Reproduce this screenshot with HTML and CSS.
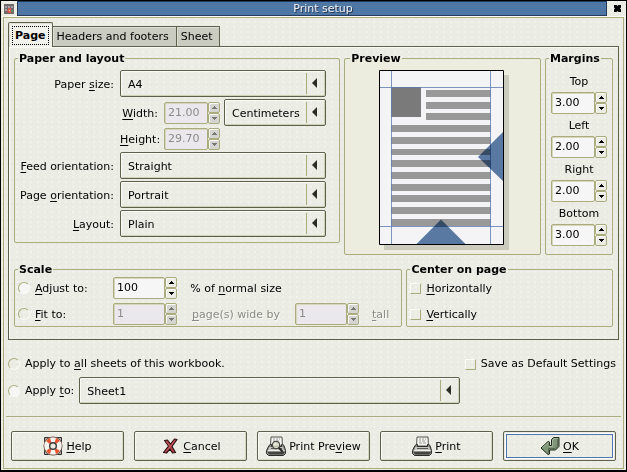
FILE: index.html
```html
<!DOCTYPE html>
<html lang="en">
<head>
<meta charset="utf-8">
<title>Print setup</title>
<link rel="stylesheet" href="styles.css">
</head>
<body>
<svg class="defs" aria-hidden="true">
  <symbol id="up" viewBox="0 0 5 3"><path d="M2 0h1v1h1v1h1v1H0V2h1V1h1z"/></symbol>
  <symbol id="down" viewBox="0 0 5 3"><path d="M0 0h5v1H4v1H3v1H2V2H1V1H0z"/></symbol>
  <symbol id="printer" viewBox="0 0 20 20">
    <path d="M5 1h11l.5 9h-12z" fill="#f4f4f0" stroke="#55554f"/>
    <path d="M7 3h2M10 3h2M13 3h1M7 5h2M10 5h3M7 7h3M11 7h3" stroke="#9a9a96"/>
    <path d="M3 9.500l1.500-1h1v2h10v-2h1l1.500 1 1.500 5v3l-2 2h-15l-2-2v-3z" fill="#8c8c88" stroke="#2c2c2a"/>
    <path d="M3.500 11h13.500l1 3h-15.500z" fill="#c6c6c2"/>
    <path d="M2 14.500h16.500" stroke="#eeeeea"/>
    <path d="M2 16h16.500v1l-1.500 1.500h-13.500l-1.500-1.500z" fill="#444441"/>
    <path d="M5 12.500h11" stroke="#5a5a56"/>
  </symbol>
</svg>
<main class="window">
  <header class="titlebar">
    <svg class="app-icon" viewBox="0 0 10 10" aria-hidden="true">
      <path fill="#6e6a6c" d="M0 0h10v10H0z"/>
      <path fill="#a5a1a8" d="M1 2h2v2H1zM4 2h2v2H4zM7 2h2v2H7zM1 5h2v2H1z"/>
      <path fill="#d9584a" d="M4 4h3v2H4zM3 6h4v3H4z"/>
      <path fill="#5d936c" d="M7 6h2v2H7z"/>
      <path fill="#f0c9c0" d="M5 6h1v1H5z"/>
    </svg>
    <h1 class="title">Print setup</h1>
    <button class="close" type="button" aria-label="Close">
      <svg viewBox="0 0 7 7" aria-hidden="true"><path d="M0 0h2.500l1 1 1-1H7v2.500l-1 1 1 1V7H4.500l-1-1-1 1H0V4.500l1-1-1-1z"/></svg>
    </button>
  </header>

  <form class="content">
    <div class="tabs" role="tablist">
      <button class="tab active" type="button" role="tab" aria-selected="true"><span>Page</span></button>
      <button class="tab" type="button" role="tab" aria-selected="false">Headers and footers</button>
      <button class="tab" type="button" role="tab" aria-selected="false">Sheet</button>
    </div>

    <section class="panel">
      <div class="groups">
        <fieldset class="group paper">
          <legend>Paper and layout</legend>
          <div class="fields">
            <label for="size">Paper <u>s</u>ize:</label>
            <div class="combo"><select id="size"><option>A4</option></select></div>
            <div class="dimension">
              <label for="width"><u>W</u>idth:</label>
              <div class="spin"><input id="width" value="21.00" disabled><div class="steps">
                <button type="button" disabled aria-label="Increase"><svg><use href="#up"/></svg></button><button type="button" disabled aria-label="Decrease"><svg><use href="#down"/></svg></button></div></div>
              <div class="combo"><select aria-label="Unit"><option>Centimeters</option></select></div>
            </div>
            <div class="dimension">
              <label for="height"><u>H</u>eight:</label>
              <div class="spin"><input id="height" value="29.70" disabled><div class="steps">
                <button type="button" disabled aria-label="Increase"><svg><use href="#up"/></svg></button><button type="button" disabled aria-label="Decrease"><svg><use href="#down"/></svg></button></div></div>
            </div>
            <label for="feed"><u>F</u>eed orientation:</label>
            <div class="combo"><select id="feed"><option>Straight</option></select></div>
            <label for="orientation">Page <u>o</u>rientation:</label>
            <div class="combo"><select id="orientation"><option>Portrait</option></select></div>
            <label for="layout"><u>L</u>ayout:</label>
            <div class="combo"><select id="layout"><option>Plain</option></select></div>
          </div>
        </fieldset>

        <fieldset class="group preview">
          <legend>Preview</legend>
          <svg class="sheet" width="130" height="180" viewBox="0 0 130 180" role="img" aria-label="Page preview">
            <path fill="#cbccbe" d="M5 5h125v175H5z"/>
            <path fill="#f4f4f6" stroke="#000" d="M.5.5h124v174H.5z"/>
            <path fill="#7a7a7b" d="M12 17h30v30H12z"/>
            <path fill="#989899" d="M47 20h65v7H47zM47 32h65v7H47zM47 43h65v7H47zM12 55h100v7H12zM12 67h100v7H12zM12 79h100v6H12zM12 90h100v7H12zM12 102h100v7H12zM12 114h100v7H12zM12 125h100v7H12zM12 137h100v7H12zM12 149h100v7H12z"/>
            <path class="guide" d="M12.500 1v173M111.500 1v173M1 17.500h123M1 156.500h123"/>
            <path class="marker" d="M99 87l25-25v49zM62 149.500L37.500 174h49z"/>
          </svg>
        </fieldset>

        <fieldset class="group margins">
          <legend>Margins</legend>
          <div class="stack">
            <label for="top">Top</label>
            <div class="spin"><input id="top" value="3.00"><div class="steps">
              <button type="button" aria-label="Increase"><svg><use href="#up"/></svg></button><button type="button" aria-label="Decrease"><svg><use href="#down"/></svg></button></div></div>
            <label for="left">Left</label>
            <div class="spin"><input id="left" value="2.00"><div class="steps">
              <button type="button" aria-label="Increase"><svg><use href="#up"/></svg></button><button type="button" aria-label="Decrease"><svg><use href="#down"/></svg></button></div></div>
            <label for="right">Right</label>
            <div class="spin"><input id="right" value="2.00"><div class="steps">
              <button type="button" aria-label="Increase"><svg><use href="#up"/></svg></button><button type="button" aria-label="Decrease"><svg><use href="#down"/></svg></button></div></div>
            <label for="bottom">Bottom</label>
            <div class="spin"><input id="bottom" value="3.00"><div class="steps">
              <button type="button" aria-label="Increase"><svg><use href="#up"/></svg></button><button type="button" aria-label="Decrease"><svg><use href="#down"/></svg></button></div></div>
          </div>
        </fieldset>
      </div>

      <div class="groups">
        <fieldset class="group scale">
          <legend>Scale</legend>
          <div class="scale-grid">
            <label class="option"><input type="radio" name="scale" class="set"><span><u>A</u>djust to:</span></label>
            <div class="spin"><input id="percent" value="100"><div class="steps">
              <button type="button" aria-label="Increase"><svg><use href="#up"/></svg></button><button type="button" aria-label="Decrease"><svg><use href="#down"/></svg></button></div></div>
            <label class="unit" for="percent">% of <u>n</u>ormal size</label>
            <label class="option first"><input type="radio" name="scale"><span><u>F</u>it to:</span></label>
            <div class="spin"><input id="wide" value="1" disabled><div class="steps">
              <button type="button" disabled aria-label="Increase"><svg><use href="#up"/></svg></button><button type="button" disabled aria-label="Decrease"><svg><use href="#down"/></svg></button></div></div>
            <label class="unit off" for="wide"><u>p</u>age(s) wide by</label>
            <div class="spin"><input id="tall" value="1" disabled><div class="steps">
              <button type="button" disabled aria-label="Increase"><svg><use href="#up"/></svg></button><button type="button" disabled aria-label="Decrease"><svg><use href="#down"/></svg></button></div></div>
            <label class="off" for="tall"><u>t</u>all</label>
          </div>
        </fieldset>

        <fieldset class="group center">
          <legend>Center on page</legend>
          <div class="checks">
            <label class="option"><input type="checkbox"><span><u>H</u>orizontally</span></label>
            <label class="option"><input type="checkbox"><span><u>V</u>ertically</span></label>
          </div>
        </fieldset>
      </div>
    </section>

    <section class="apply">
      <label class="option all"><input type="radio" name="apply"><span>Apply to <u>a</u>ll sheets of this workbook.</span></label>
      <label class="option"><input type="checkbox"><span class="save">Save as Default Settings</span></label>
      <label class="option"><input type="radio" name="apply" class="set"><span>Apply <u>t</u>o:</span></label>
      <div class="combo"><select aria-label="Sheet"><option>Sheet1</option></select></div>
    </section>

    <footer class="actions">
      <button class="action" type="button">
        <svg viewBox="0 0 20 20" aria-hidden="true">
          <path d="M1.500 1.500h4l2 1h5l2-1h4v4l-1 2v5l1 2v4h-4l-2-1h-5l-2 1h-4v-4l1-2v-5l-1-2z" fill="#a9a9a2" stroke="#33332f"/>
          <circle cx="10" cy="10" r="6" fill="none" stroke="#5a3a30" stroke-width="7"/>
          <circle cx="10" cy="10" r="6" fill="none" stroke="#f5f3ee" stroke-width="5.600"/>
          <path d="M3.200 4.900A8.500 8.500 0 0 1 7 2l1.300 4.500A4 4 0 0 0 6.300 7.700zM13 2a8.500 8.500 0 0 1 3.800 2.900l-3.200 2.700a4 4 0 0 0-1.900-1.200zM3.200 15.100A8.500 8.500 0 0 0 7 18l1.300-4.500a4 4 0 0 1-2-1.200zM13 18a8.500 8.500 0 0 0 3.800-2.900l-3.200-2.700a4 4 0 0 1-1.900 1.200z" fill="#e9532f"/>
          <circle cx="10" cy="10" r="3.300" fill="#e9eae1" stroke="#3a3a36" stroke-width="1.400"/>
        </svg><span><u>H</u>elp</span></button>
      <button class="action" type="button">
        <svg viewBox="0 0 20 20" aria-hidden="true">
          <path d="M4.500 4.500l3-.5 3 4 4-5 2.500.5-5 7 3.500 6-3 .5-2.500-4-3.500 4-3-.5 5-6.500z" fill="#b8434a" stroke="#2a1213" stroke-width="1.200" stroke-linejoin="round"/>
          <path d="M6.500 5.500l3.500 5M14.500 5L7 14.500" stroke="#c9595f" fill="none"/>
        </svg><span><u>C</u>ancel</span></button>
      <button class="action" type="button">
        <svg viewBox="0 0 20 20" aria-hidden="true"><use href="#printer"/>
          <circle cx="10" cy="9" r="3.700" fill="#d8dcc6" fill-opacity=".9" stroke="#4b4b45" stroke-width="1.200"/>
          <path d="M12.800 11.800l4 4" stroke="#262624" stroke-width="2"/>
          <path d="M8 8.500l2-1.500" stroke="#fff"/>
        </svg><span>Print Pre<u>v</u>iew</span></button>
      <button class="action" type="button">
        <svg viewBox="0 0 20 20" aria-hidden="true"><use href="#printer"/></svg><span><u>P</u>rint</span></button>
      <button class="action default" type="button">
        <svg viewBox="0 0 20 20" aria-hidden="true">
          <path d="M11.500 3.500l2-2h5.500v9l-3.500 3.500H9.500v4l-1.500.5-7-6.500 7-6.500 1.500.5v3.500h2z" fill="#7f9679" stroke="#1e2a1c" stroke-linejoin="round"/>
          <path d="M12.500 4l1.500-1.500h4M2.500 11.500l6-5M9 10.500h3.500V4" stroke="#a3b59d" fill="none"/>
          <path d="M17.500 3v7l-2.500 2.500H8.500V17" stroke="#566b50" fill="none"/>
        </svg><span><u>O</u>K</span></button>
    </footer>
  </form>
</main>
</body>
</html>
```
FILE: styles.css
```css
:root {
  --face: #ebece3;
  --olive: #abac7e;
  --dark: #5f604b;
  --light: #fafaf6;
  --off: #8b8b86;
}

* { box-sizing: border-box; }

body {
  margin: 0;
  min-height: 100vh;
  background: #000;
  color: #000;
  font: 11px/14px "DejaVu Sans", sans-serif;
}

button, input, select { font: inherit; color: inherit; margin: 0; }
button { padding: 0; }
u { text-underline-offset: 2px; text-decoration-thickness: 1px; }
.defs { position: absolute; width: 0; height: 0; }

.window {
  display: flex;
  flex-direction: column;
  min-height: 100vh;
  border: 1px solid #000;
  border-bottom-width: 2px;
  /* paper grain */
  background:
    radial-gradient(circle at 2px 1px, #f1f2eb 0 1px, transparent 1px) 0 0 / 7px 5px,
    radial-gradient(circle at 1px 3px, #e7e9e2 0 1px, transparent 1px) 0 0 / 5px 8px,
    var(--face);
}

.titlebar {
  display: flex;
  align-items: center;
  height: 16px;
  padding: 1px 2px 1px 3px;
  gap: 3px;
  border-bottom: 1px solid var(--light);
}
.app-icon { width: 10px; height: 10px; }
.title {
  flex: 1;
  margin: 0;
  padding-left: 22px;
  border: 1px solid #263a5e;
  background: repeating-linear-gradient(#4677ab 0 1px, #58779f 1px 2px);
  color: #f2f2f2;
  font-size: 11px;
  line-height: 13px;
  font-weight: normal;
  text-align: center;
  text-shadow: 1px 1px 0 #24344e;
}
.close { width: 14px; height: 12px; border: 0; background: none; display: grid; place-items: center; }
.close svg { width: 7px; height: 7px; }

.content {
  flex: 1;
  display: flex;
  flex-direction: column;
  margin: 0 2px 1px;
  padding: 4px;
  border: 1px solid var(--olive);
}

.tabs { display: flex; align-items: flex-end; }
.tab {
  height: 20px;
  padding: 0 7px 0 4px;
  border: 1px solid var(--dark);
  border-left-width: 0;
  border-bottom: 0;
  background: #cbccc1;
  box-shadow: inset 1px 1px 0 #dedfd6;
}
.tab.active {
  height: 25px;
  margin-bottom: -1px;
  padding: 0 3px;
  border-left-width: 1px;
  border-radius: 2px 2px 0 0;
  background: #f2f2ec;
  font-weight: bold;
  z-index: 1;
}
.tab.active span { display: block; padding: 2px 2px 1px; border: 1px dotted #000; }

.panel {
  display: flex;
  flex-direction: column;
  gap: 8px;
  padding: 5px 5px 12px;
  border: 1px solid var(--dark);
  box-shadow: inset 1px 1px 0 var(--light);
}
.groups { display: flex; align-items: flex-start; gap: 4px; }
.group { min-width: 0; margin: 0; padding: 0; border: 1px solid var(--olive); border-radius: 2px; }
.group legend { margin-left: 3px; padding: 0 1px; font-weight: bold; line-height: 13px; }

.paper { flex: 328; }
.preview { flex: 195; align-self: stretch; background: #ecedde; }
.margins { flex: none; }
.scale { flex: 389; }
.center { flex: 206; }

.fields {
  display: grid;
  grid-template-columns: auto 1fr;
  align-items: center;
  gap: 2px 6px;
  padding: 5px 13px 5px 5px;
}
.fields label { padding-top: 2px; text-align: right; }
.dimension { grid-column: 2; display: flex; align-items: center; gap: 6px; }
.dimension label { width: 38px; white-space: nowrap; }
.dimension .spin { width: 56px; }
.dimension .combo { flex: 1; margin-left: -2px; }

.combo { position: relative; min-width: 0; }
.combo select {
  appearance: none;
  display: block;
  width: 100%;
  height: 27px;
  padding: 2px 22px 0 7px;
  border: 1px solid var(--dark);
  border-radius: 2px;
  background: transparent;
  box-shadow: inset 1px 1px 0 var(--light), inset -1px -1px 0 #cfd1b9;
}
.combo::before, .combo::after { content: ""; position: absolute; pointer-events: none; }
.combo::before { right: 19px; top: 3px; bottom: 3px; border-left: 1px solid var(--olive); }
.combo::after {
  right: 9px;
  top: 8px;
  border: 5px solid transparent;
  border-left-width: 0;
  border-right-color: #2b2c26;
}

.spin { display: flex; height: 22px; }
.spin input {
  flex: 1;
  min-width: 0;
  width: 0;
  padding: 0 3px;
  border: 1px solid var(--olive);
  border-radius: 2px;
  background: #f6f6f7;
  box-shadow: inset 1px 1px 0 #d5d6bb;
}
.steps { display: flex; flex-direction: column; width: 12px; }
.steps button {
  flex: 1;
  display: grid;
  place-items: center;
  border: 1px solid var(--olive);
  border-radius: 2px;
  background: var(--face);
  box-shadow: inset 1px 1px 0 var(--light);
}
.steps svg { width: 5px; height: 3px; fill: #000; }
.spin input:disabled { background: #ebe8ed; color: var(--off); }
.steps button:disabled { background: #d4d5d0; }
.steps button:disabled svg { fill: #777872; }

.preview { padding-left: 2px; }
.sheet { display: block; margin: 5px auto 4px; }
.guide { fill: none; stroke: #5d7eb0; stroke-opacity: .8; }
.marker { fill: #5d7ea8; mix-blend-mode: multiply; }

.stack { display: grid; gap: 3px; padding: 8px 5px; text-align: center; }
.stack label { padding-top: 2px; }
.stack .spin { width: 56px; }

.scale-grid {
  display: grid;
  grid-template-columns: 82px 64px 92px 64px auto;
  align-items: center;
  justify-content: start;
  gap: 4px 13px;
  padding: 1px 3px;
}
.first { grid-column: 1; }
.unit { text-align: center; white-space: nowrap; }
.off { color: var(--off); text-shadow: 1px 1px 0 var(--light); }
.checks { display: grid; grid-auto-rows: 22px; align-items: center; gap: 4px; padding: 1px 3px; }
.group .option span, .scale-grid > label:not(.option) { padding-top: 2px; }

.option { display: flex; align-items: center; gap: 5px; white-space: nowrap; }
.option input {
  appearance: none;
  flex: none;
  width: 11px;
  height: 11px;
  border: 1px solid;
  border-color: var(--light) var(--olive) var(--olive) var(--light);
}
.option input[type="radio"] {
  width: 12px;
  height: 12px;
  border-radius: 50%;
  border-color: var(--olive) var(--light) var(--light) var(--olive);
}
.option input.set { background: #f6f6f4; }

.apply {
  display: grid;
  grid-template-columns: auto 1fr auto;
  align-items: center;
  gap: 6px 5px;
  padding: 17px 0 12px;
}
.all { grid-column: span 2; }
.save { padding-right: 3px; }

.actions {
  display: grid;
  grid-template-columns: repeat(5, 1fr);
  gap: 10px;
  margin: 0 -2px;
  padding: 14px 5px 0;
  border-top: 1px solid var(--olive);
}
.action {
  display: flex;
  align-items: center;
  justify-content: center;
  gap: 3px;
  height: 30px;
  border: 1px solid var(--dark);
  border-radius: 2px;
  background: transparent;
  box-shadow: inset 1px 1px 0 var(--light), inset -1px -1px 0 #d6d8c4;
}
.action span { padding-top: 2px; }
.action svg { width: 20px; height: 20px; }
.default { box-shadow: inset 0 0 0 1px var(--face), inset 0 0 0 2px var(--light), inset 0 0 0 3px #4f74b0; }
```
